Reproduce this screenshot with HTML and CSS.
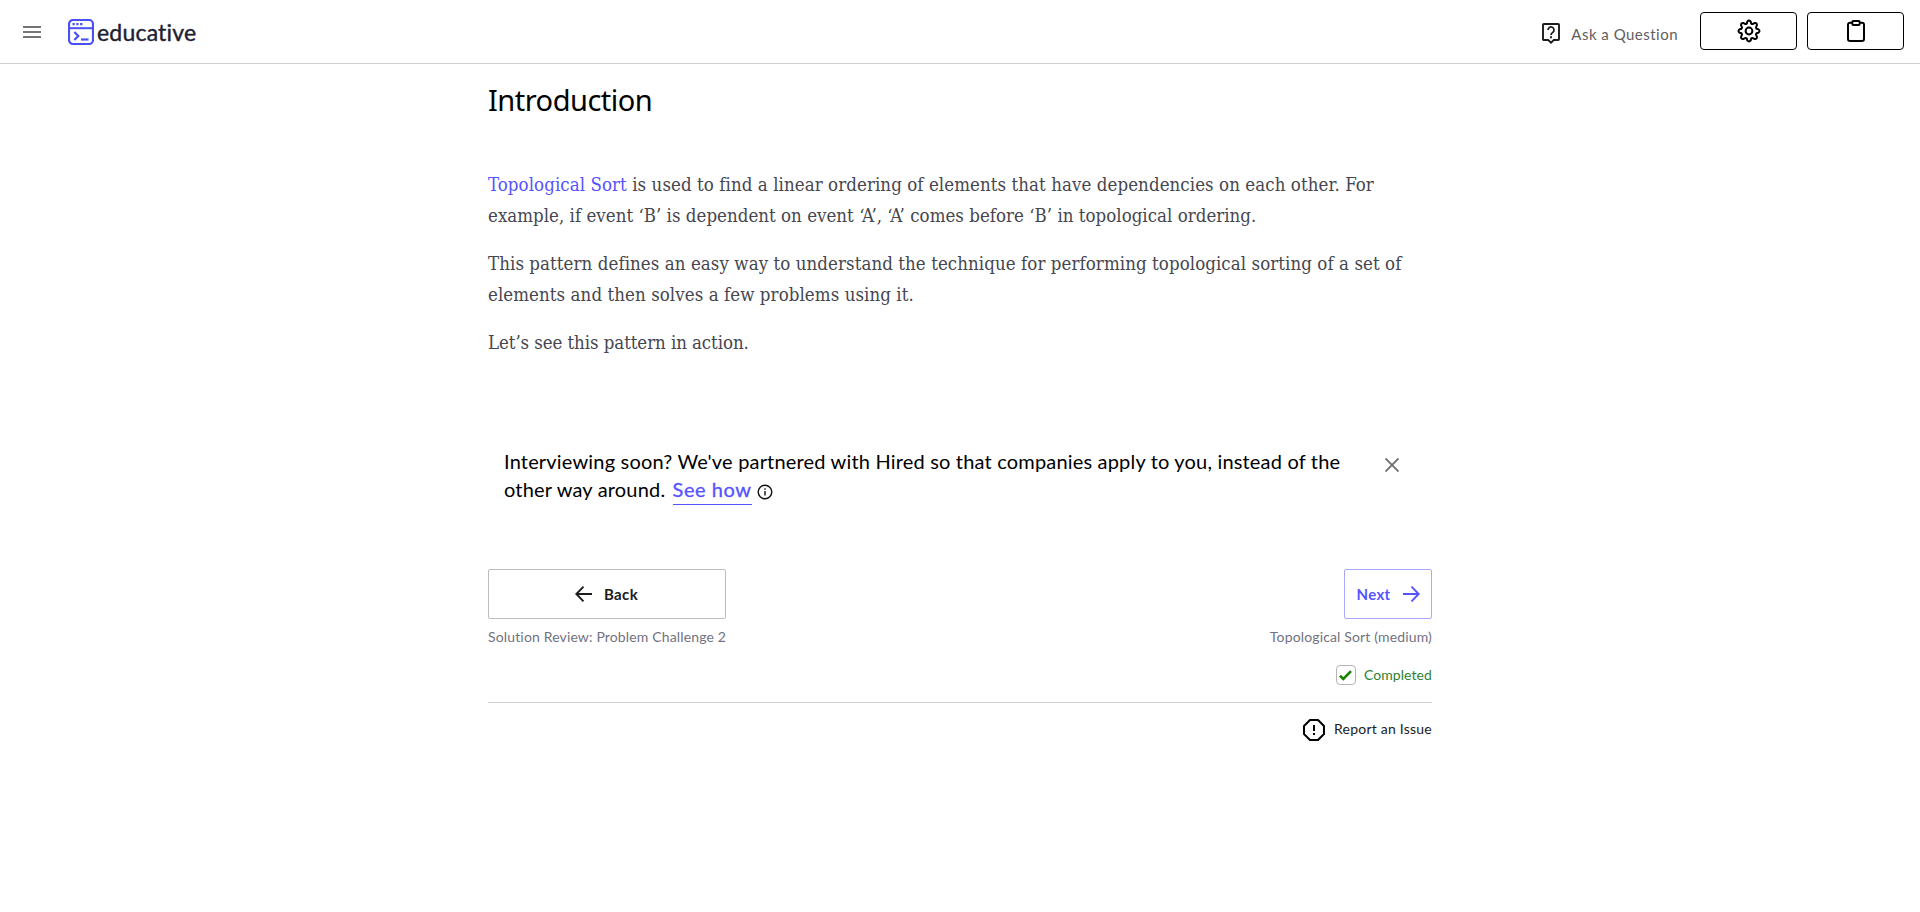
FILE: index.html
```html
<!DOCTYPE html>
<html lang="en">
<head>
<meta charset="utf-8">
<title>Introduction</title>
<link rel="stylesheet" href="styles.css">
</head>
<body>
<header class="topbar">
  <div class="topbar-left">
    <svg class="menu" width="18" height="12" viewBox="0 0 18 12"><path d="M0 1h18M0 6h18M0 11h18" stroke="#757575" stroke-width="2"/></svg>
    <a class="brand">
      <svg width="26" height="26" viewBox="0 0 26 26" fill="none" stroke="#4951f5"><rect x="1" y="1" width="24" height="24" rx="4" stroke-width="2.200"/><path d="M1 9.200h24" stroke-width="2"/><path d="M4.500 5.200h2.300M8.300 5.200h2.300M12.100 5.200h2.300" stroke-width="2.300"/><path d="M6.300 13l4 4-4 4" stroke-width="2.200"/><path d="M13 20.500h7.500" stroke-width="2.200"/></svg>
      <span class="wordmark">educative</span>
    </a>
  </div>
  <div class="topbar-right">
    <a class="ask">
      <svg width="18" height="21" viewBox="0 0 18 21" fill="none" stroke="#1c1c1c"><path d="M1.800 1h14.400a.8.8 0 0 1 .8.8v14.400a.8.8 0 0 1-.8.8h-4.400L9 19.600 6.200 17H1.800a.8.8 0 0 1-.8-.8V1.800A.8.8 0 0 1 1.800 1z" stroke-width="1.900"/><path d="M6 7a3 3 0 1 1 4.800 2.400C9.700 10.200 9 10.700 9 12" stroke-width="1.700"/><path d="M9 13.300v1.900" stroke-width="1.900"/></svg>
      <span class="ask-text">Ask a Question</span>
    </a>
    <button class="tool" aria-label="Settings"><svg width="24" height="24" viewBox="0 0 24 24" fill="none" stroke="#000" stroke-width="2" stroke-linejoin="round"><circle cx="12" cy="12" r="3.400"/><path d="M10.300 2.600Q12 .4 13.700 2.600L14.200 4.500Q15.200 5.500 16.400 4.700L17.400 4.100Q20.300 3.700 19.900 6.600L19.300 7.600Q18.500 8.800 19.500 9.800L21.400 10.300Q23.600 12 21.400 13.700L19.500 14.200Q18.500 15.200 19.300 16.400L19.900 17.400Q20.300 20.300 17.400 19.900L16.400 19.300Q15.200 18.500 14.200 19.500L13.700 21.400Q12 23.600 10.300 21.400L9.800 19.500Q8.800 18.500 7.600 19.300L6.600 19.900Q3.700 20.300 4.100 17.400L4.700 16.400Q5.500 15.200 4.500 14.200L2.600 13.700Q.4 12 2.600 10.300L4.500 9.800Q5.500 8.800 4.700 7.600L4.100 6.600Q3.700 3.700 6.600 4.100L7.600 4.700Q8.800 5.500 9.800 4.500Z"/></svg></button>
    <button class="tool" aria-label="Notes"><svg width="18" height="22" viewBox="0 0 18 22" fill="none" stroke="#000" stroke-width="2"><path d="M5.500 2.700H3a2 2 0 0 0-2 2V19a2 2 0 0 0 2 2h12a2 2 0 0 0 2-2V4.700a2 2 0 0 0-2-2h-2.500"/><rect x="5.300" y="1" width="7.400" height="4" rx="1.200"/></svg></button>
  </div>
</header>
<main class="content">
  <h1 class="title">Introduction</h1>
  <article class="lesson">
    <p><a class="link">Topological Sort</a> is used to find a linear ordering of elements that have dependencies on each other. For<br><span class="snug">example, if event ‘B’ is dependent on event ‘A’, ‘A’ comes before ‘B’ in topological ordering.</span></p>
    <p>This pattern defines an easy way to understand the technique for performing topological sorting of a set of<br>elements and then solves a few problems using it.</p>
    <p class="tight">Let’s see this pattern in action.</p>
  </article>
  <section class="promo">
    <div class="promo-text">Interviewing soon? We've partnered with Hired so that companies apply to you, instead of the<br>other way around. <a class="see">See how</a><svg class="info" width="16" height="16" viewBox="0 0 16 16" fill="none" stroke="#111" stroke-width="1.400"><circle cx="8" cy="8" r="6.800"/><path d="M8 7v4.500M8 4.300v1.500"/></svg></div>
    <svg class="close" width="14" height="14" viewBox="0 0 14 14" stroke="#707070" stroke-width="1.900"><path d="M.5.5l13 13M13.500.5l-13 13"/></svg>
  </section>
  <nav class="pager">
    <div class="prev">
      <button class="btn back"><svg width="17" height="16" viewBox="0 0 17 16" fill="none" stroke="#1c1c1c" stroke-width="1.900"><path d="M17 8H1.500M8.500.7L1.300 8l7.200 7.300"/></svg><span>Back</span></button>
      <span class="caption">Solution Review: Problem Challenge 2</span>
    </div>
    <div class="next">
      <button class="btn fwd"><span>Next</span><svg width="17" height="16" viewBox="0 0 17 16" fill="none" stroke="#5553ff" stroke-width="1.900"><path d="M0 8h15.500M8.500.7L15.700 8l-7.200 7.300"/></svg></button>
      <span class="caption">Topological Sort (medium)</span>
      <div class="done"><span class="box"><svg width="13" height="11" viewBox="0 0 13 11" fill="none" stroke="#1b8200" stroke-width="2.600"><path d="M1 5.800l3.300 3.200L12 1.200"/></svg></span><span>Completed</span></div>
    </div>
  </nav>
  <footer class="report">
    <svg width="22" height="22" viewBox="0 0 22 22" fill="none" stroke="#000" stroke-width="2"><path d="M7 1h8l6 6v8l-6 6H7l-6-6V7z" stroke-linejoin="round"/><path d="M11 6v6M11 14v2"/></svg>
    <span class="report-text">Report an Issue</span>
  </footer>
</main>
</body>
</html>
```
FILE: styles.css
```css
* { box-sizing: border-box; }
body { margin: 0; background: #fff; font-family: Lato, sans-serif; color: #000; }
button { font: inherit; background: #fff; padding: 0; }
svg { display: block; flex: none; }
.topbar { height: 64px; border-bottom: 1px solid #d0d0d0; display: flex; justify-content: space-between; padding: 0 16px 0 23px; }
.topbar-left { display: flex; align-items: center; gap: 27px; }
.brand { display: flex; align-items: center; gap: 3px; }
.wordmark { font-size: 23px; line-height: 26px; letter-spacing: .2px; color: #1f1f32; -webkit-text-stroke: .4px #1f1f32; }
.topbar-right { display: flex; align-items: flex-start; padding-top: 12px; }
.ask { display: flex; gap: 11px; padding-top: 11px; margin-right: 22px; }
.ask-text { font-size: 15px; line-height: 22px; letter-spacing: .48px; color: #606060; }
.tool { width: 97px; height: 38px; border: 1px solid #000; border-radius: 4px; display: flex; align-items: center; justify-content: center; }
.tool + .tool { margin-left: 10px; }
.content { width: 944px; margin: 0 auto; }
.title { margin: 0; padding-top: 15px; height: 58px; font: 400 29px/42px "Noto Sans", sans-serif; letter-spacing: -.5px; }
.lesson { padding-top: 47px; font: 18.5px/31px "DejaVu Serif Condensed", "DejaVu Serif", serif; font-stretch: condensed; letter-spacing: .08px; color: #46464f; }
.lesson p { margin: 0 0 17px; white-space: nowrap; }
.lesson .snug { letter-spacing: .03px; }
.lesson .tight { letter-spacing: -.07px; }
.link { color: #5553ff; }
.promo { display: flex; justify-content: space-between; height: 130px; padding: 72px 33px 0 16px; }
.promo-text { font-size: 20px; line-height: 28px; letter-spacing: .18px; white-space: nowrap; }
.see { color: #5553ff; border-bottom: 1px solid #5553ff; display: inline-block; padding-bottom: 1px; letter-spacing: .55px; margin-left: 2px; -webkit-text-stroke: .3px #5553ff; }
.info { display: inline-block; margin-left: 5px; vertical-align: -3px; }
.close { margin-top: 11px; }
.pager { display: flex; justify-content: space-between; margin-top: 64px; height: 134px; border-bottom: 1px solid #d0d0d0; }
.prev, .next { display: flex; flex-direction: column; }
.next { align-items: flex-end; }
.btn { height: 50px; border: 1px solid #bdbdbd; border-radius: 2px; display: flex; align-items: center; justify-content: center; gap: 12px; font-size: 15px; font-weight: 700; letter-spacing: .35px; }
.back { width: 238px; padding-right: 1px; color: #1c1c1c; }
.fwd { width: 88px; border-color: #a9a8ff; color: #5553ff; }
.caption { margin-top: 8px; padding-bottom: 2px; font-size: 14px; line-height: 19px; letter-spacing: .15px; color: #727280; white-space: nowrap; }
.done { display: flex; align-items: center; gap: 8px; margin-top: 17px; color: #2f8132; font-size: 14px; line-height: 20px; letter-spacing: .08px; }
.box { width: 20px; height: 20px; border: 1px solid #b5b5b5; border-radius: 4px; display: flex; align-items: center; justify-content: center; }
.report { display: flex; justify-content: flex-end; align-items: center; gap: 9px; padding-top: 16px; font-size: 14px; letter-spacing: .23px; color: #1c1c1c; }
.report-text { line-height: 20px; padding-bottom: 2px; }
```
